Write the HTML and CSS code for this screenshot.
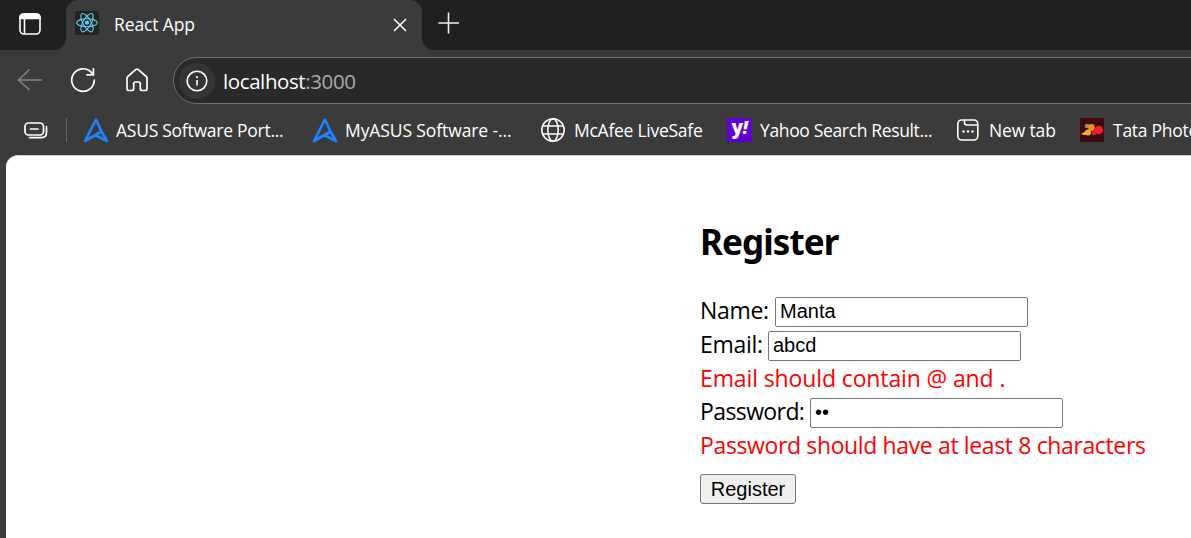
FILE: index.html
```html
<!DOCTYPE html>
<html lang="en">
<head>
<meta charset="utf-8">
<title>React App</title>
<link rel="stylesheet" href="styles.css">
</head>
<body>
<div class="browser">
  <header class="tabstrip">
    <div class="tab-actions">
      <svg width="22" height="22" viewBox="0 0 22 22" fill="none" stroke="#fff" stroke-width="1.6"><rect x="1" y="1" width="20" height="20" rx="4"/><path d="M1 5.500V4.500Q1 1 5 1H17Q21 1 21 4.500V5.500Z" fill="#fff"/><path d="M5.500 6V21"/></svg>
    </div>
    <div class="tab">
      <svg class="favicon" width="24" height="24" viewBox="0 0 24 24"><rect width="24" height="24" rx="2.500" fill="#222"/><g fill="none" stroke="#5ccfee" stroke-width="1.150"><ellipse cx="12" cy="11.700" rx="10.300" ry="4"/><ellipse cx="12" cy="11.700" rx="10.300" ry="4" transform="rotate(60 12 11.700)"/><ellipse cx="12" cy="11.700" rx="10.300" ry="4" transform="rotate(120 12 11.700)"/></g><circle cx="12" cy="11.700" r="2.100" fill="#5ccfee"/></svg>
      <span class="tab-title">React App</span>
      <svg class="close" width="14" height="14" viewBox="0 0 14 14" stroke="#fff" stroke-width="1.500"><path d="M1 1L13 13M13 1L1 13"/></svg>
    </div>
    <div class="strip-rest">
      <svg width="22" height="22" viewBox="0 0 22 22" stroke="#eee" stroke-width="1.600"><path d="M0.500 11H21M10.500 0.500V21.500"/></svg>
    </div>
  </header>
  <nav class="toolbar">
    <svg class="back" width="26" height="24" viewBox="0 0 26 24" fill="none" stroke="#858585" stroke-width="1.500"><path d="M25 12H2M12.500 1.500L1.500 12L12.500 22"/></svg>
    <svg class="reload" width="26" height="26" viewBox="0 0 26 26" fill="none" stroke="#fff" stroke-width="1.700" stroke-linecap="round"><path d="M24.300 13A11.300 11.300 0 1 1 21.500 5.600L23.400 7.500M23.400 1.500V7.800H17"/></svg>
    <svg class="home" width="24" height="24" viewBox="0 0 24 24" fill="none" stroke="#fff" stroke-width="1.700" stroke-linejoin="round"><path d="M2 10.300Q2 9.300 2.800 8.500L10.700 1.700Q12 .700 13.300 1.700L21.200 8.500Q22 9.300 22 10.300V20.500Q22 22.500 20 22.500H17.200Q15.300 22.500 15.300 20.500V15.800Q15.300 14 13.500 14H10.500Q8.700 14 8.700 15.800V20.500Q8.700 22.500 6.800 22.500H4Q2 22.500 2 20.500Z"/></svg>
    <div class="address">
      <span class="info"><svg width="22" height="22" viewBox="0 0 22 22" fill="none" stroke="#fff" stroke-width="1.600"><circle cx="11" cy="11" r="9.800"/><path d="M11 10V15.500"/><circle cx="11" cy="7.200" r="1.100" fill="#fff" stroke="none"/></svg></span>
      <span class="url"><span class="host">localhost</span><span class="port">:3000</span></span>
    </div>
  </nav>
  <nav class="bookmarks">
    <svg class="workspaces" width="24" height="17" viewBox="0 0 24 17" fill="none" stroke="#fff" stroke-width="1.700" stroke-linecap="round"><rect x="1" y="1" width="18.500" height="12" rx="3.500"/><path d="M6.500 7H14M22.500 4.500V10.500Q22.500 15.600 17.500 15.600H5.500"/></svg>
    <span class="divider"></span>
    <a class="bookmark asus"><svg width="26" height="26" viewBox="0 0 26 26" fill="none" stroke="#1c84ff" stroke-width="2.600" stroke-linejoin="round" stroke-linecap="round"><path d="M18.500 14.500L24 24L13 18.500M18.500 14.500L13 2.500L2 24L18.500 14.500"/></svg><span class="label l-port">ASUS Software Port...</span></a>
    <a class="bookmark myasus"><svg width="26" height="26" viewBox="0 0 26 26" fill="none" stroke="#1c84ff" stroke-width="2.600" stroke-linejoin="round" stroke-linecap="round"><path d="M18.500 14.500L24 24L13 18.500M18.500 14.500L13 2.500L2 24L18.500 14.500"/></svg><span class="label l-my">MyASUS Software -...</span></a>
    <a class="bookmark mcafee"><svg width="24" height="24" viewBox="0 0 24 24" fill="none" stroke="#fff" stroke-width="1.500"><circle cx="12" cy="12" r="11.200"/><ellipse cx="12" cy="12" rx="5.200" ry="11.200"/><path d="M2 8H22M2 16H22"/></svg><span class="label l-mc">McAfee LiveSafe</span></a>
    <a class="bookmark yahoo"><span class="yahoo-icon">y<i>!</i></span><span class="label l-yahoo">Yahoo Search Result...</span></a>
    <a class="bookmark newtab"><svg width="24" height="24" viewBox="0 0 24 24" fill="none" stroke="#fff" stroke-width="1.600"><rect x="1.800" y="2" width="20" height="20" rx="4"/><path d="M8.500 2V4.500Q8.500 7 11 7H21.500"/><g fill="#fff" stroke="none"><circle cx="7.500" cy="13.500" r="1.300"/><circle cx="12" cy="13.500" r="1.300"/><circle cx="16.500" cy="13.500" r="1.300"/></g></svg><span class="label l-new">New tab</span></a>
    <a class="bookmark tata"><svg width="24" height="24" viewBox="0 0 24 24"><path fill="#3d0b0d" d="M0 0H24V24H0Z"/><path d="M1 16L6 13L10 17H4Z" fill="#fbb32c"/><circle cx="7" cy="8" r="2.300" fill="#a48578"/><circle cx="11.500" cy="9.500" r="3.400" fill="#f58a24"/><circle cx="8" cy="14.500" r="3" fill="#fbae25"/><circle cx="14" cy="15" r="2.300" fill="#d82725"/><circle cx="18.800" cy="12" r="4.300" fill="#f51834"/></svg><span class="label l-tata">Tata Photo</span></a>
  </nav>
  <main class="page">
    <form class="register">
      <h2>Register</h2>
      <div class="row"><label class="name-label" for="name">Name:</label><input id="name" type="text" value="Manta"></div>
      <div class="row"><label class="email-label" for="email">Email:</label><input id="email" type="text" value="abcd"></div>
      <p class="error email-error">Email should contain @ and .</p>
      <div class="row"><label class="password-label" for="password">Password:</label><input id="password" type="password" value="ab"></div>
      <p class="error password-error">Password should have at least 8 characters</p>
      <button type="button">Register</button>
    </form>
  </main>
</div>
</body>
</html>
```
FILE: styles.css
```css
* { box-sizing: border-box; }
body { margin: 0; overflow: hidden; font-family: "Open Sans", "Noto Sans", sans-serif; background: #3b3b3b; }
svg { display: block; flex: none; }
.browser { height: 538px; display: flex; flex-direction: column; background: #3b3b3b; overflow: hidden; }
.tabstrip { height: 50px; display: flex; flex: none; color: #fff; background: linear-gradient(#202020 0 25px, #3b3b3b 25px); }
.tab-actions { width: 66px; padding: 13px 0 0 19px; background: #202020; border-bottom-right-radius: 12px; }
.tab { width: 356px; display: flex; align-items: center; padding: 0 15px 4px 9px; background: #3b3b3b; border-radius: 12px 12px 0 0; }
.tab-title { font-size: 17.500px; margin-left: 15px; margin-top: 1px; flex: 1; letter-spacing: -.12px; }
.close { margin-top: 4px; }
.strip-rest { flex: 1; padding: 12px 0 0 16px; background: #202020; border-bottom-left-radius: 12px; }
.toolbar { height: 56px; flex: none; display: flex; align-items: center; padding: 5px 0 0 17px; }
.back, .reload, .home { margin-top: -2px; }
.reload { margin-left: 27px; }
.home { margin-left: 29px; }
.address { flex: 1; height: 47px; margin-left: 24px; margin-right: -30px; display: flex; align-items: center; background: #292929; border: 1.500px solid #707070; border-radius: 24px; padding-left: 5px; }
.info { width: 36px; height: 36px; border-radius: 50%; background: #353535; display: flex; align-items: center; justify-content: center; }
.url { font-size: 20.500px; margin-left: 8px; letter-spacing: -.4px; }
.host { color: #fff; }
.port { color: #aaa; }
.bookmarks { height: 49px; flex: none; display: flex; align-items: center; padding: 0 0 1px 24px; color: #fff; }
.divider { flex: none; width: 1px; height: 24px; background: #656565; margin: 0 16px 0 18px; }
.bookmark { display: flex; align-items: center; flex: none; height: 26px; white-space: nowrap; }
.label { font-size: 17.500px; line-height: 24px; margin-left: 9px; letter-spacing: -.26px; }
.l-my { letter-spacing: -.1px; }
.l-yahoo { letter-spacing: -.35px; }
.l-new { letter-spacing: -.15px; }
.asus, .myasus { width: 229px; }
.asus .label, .myasus .label { margin-left: 7px; }
.mcafee { width: 186px; }
.yahoo { width: 229px; }
.newtab { width: 124px; }
.yahoo-icon { width: 25px; height: 24px; background: #6001d2; font: 900 19px/18px "Open Sans", sans-serif; text-align: center; letter-spacing: -.5px; }
.yahoo .label { margin-left: 8px; }
.yahoo-icon i { font-size: 18px; }
.page { flex: 1; margin-left: 6px; background: #fff; border-top: 1px solid #d0d0d0; border-top-left-radius: 12px; color: #000; padding: 61px 0 0 694px; }
.register { width: 480px; }
h2 { margin: 0 0 30px; font-family: "Noto Sans", sans-serif; font-size: 35px; line-height: 50px; letter-spacing: -.9px; }
.row { display: flex; height: 30px; margin-bottom: 4px; }
label { font-size: 23px; line-height: 26px; letter-spacing: -.3px; white-space: nowrap; }
.name-label { width: 75px; }
.email-label { width: 68px; }
.password-label { width: 110px; letter-spacing: -.6px; }
input { width: 253px; height: 30px; border: 1px solid #767676; border-radius: 2px; padding: 0 4px 2px; margin: 0; font: 20px "Liberation Sans", Arial, sans-serif; color: #000; background: #fff; outline: none; }
.error { margin: 0; font-size: 23px; color: #f00; white-space: nowrap; height: 33px; line-height: 27px; letter-spacing: -.12px; }
.password-error { height: 42px; letter-spacing: -.37px; }
button { display: block; width: 96px; height: 30px; border: 1px solid #767676; border-radius: 3px; padding: 0; background: #efefef; color: #000; font: 20px "Liberation Sans", Arial, sans-serif; }
```
